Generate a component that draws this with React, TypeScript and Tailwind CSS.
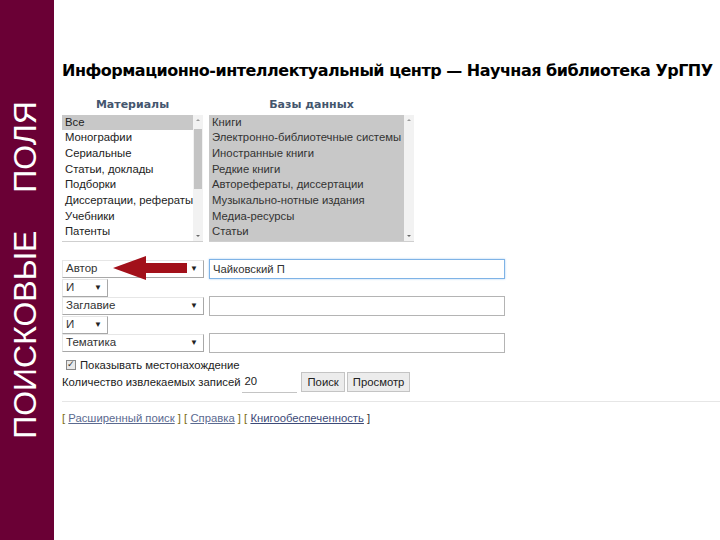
import React from 'react';

const materials = [
  'Все',
  'Монографии',
  'Сериальные',
  'Статьи, доклады',
  'Подборки',
  'Диссертации, рефераты',
  'Учебники',
  'Патенты',
];

const bases = [
  'Книги',
  'Электронно-библиотечные системы',
  'Иностранные книги',
  'Редкие книги',
  'Авторефераты, диссертации',
  'Музыкально-нотные издания',
  'Медиа-ресурсы',
  'Статьи',
];

function ScrollBar({ thumb }: { thumb: boolean }) {
  return (
    <div className="relative shrink-0 w-[10px] h-full bg-[#f2f2f2] flex flex-col items-center justify-between py-[4px]">
      <span className="w-0 h-0 border-l-[2px] border-r-[2px] border-b-[2px] border-l-transparent border-r-transparent border-b-[#9a9a9a]" />
      {thumb && <div className="absolute left-[1px] right-[1px] top-[14px] h-[60px] bg-[#c4c4c4]" />}
      <span className="w-0 h-0 border-l-[2px] border-r-[2px] border-t-[2px] border-l-transparent border-r-transparent border-t-[#6a6a6a]" />
    </div>
  );
}

function SelectBox({ label, width }: { label: string; width: string }) {
  return (
    <div
      className={`${width} shrink-0 h-[18px] flex items-center justify-between pl-[3px] pr-[5px] border-t border-l border-[#e6e6e6] border-r-[#a8a8a8] border-b-[#a8a8a8] border-r border-b bg-white text-[11.5px] text-[#333]`}
    >
      <span>{label}</span>
      <span className="text-[8px] text-[#222]">▼</span>
    </div>
  );
}

export default function App() {
  return (
    <div
      className="w-[720px] h-[540px] flex bg-white overflow-hidden"
      style={{ fontFamily: '"Liberation Sans", Arial, sans-serif' }}
    >
      {/* Sidebar */}
      <div className="w-[54px] shrink-0 h-full bg-[#6a0035] flex items-center justify-center">
        <div className="[writing-mode:vertical-rl] rotate-180 text-white text-[32px] leading-none flex gap-[38px] ml-[-4px]">
          <span>ПОИСКОВЫЕ</span>
          <span>ПОЛЯ</span>
        </div>
      </div>

      {/* Content */}
      <div className="relative flex-1 pl-[8px] pt-[59px]">
        <h1
          className="text-[16px] font-bold text-black leading-[24px] whitespace-nowrap tracking-[-0.5px]"
          style={{ fontFamily: '"DejaVu Sans", Verdana, sans-serif' }}
        >
          Информационно-интеллектуальный центр — Научная библиотека УрГПУ
        </h1>

        {/* Lists */}
        <div
          className="flex gap-[6px] mt-[14px] text-[11px] font-bold text-[#44566e]"
          style={{ fontFamily: '"DejaVu Sans", Verdana, sans-serif' }}
        >
          <div className="w-[141px] text-center">Материалы</div>
          <div className="w-[205px] text-center">Базы данных</div>
        </div>
        <div className="flex gap-[6px] mt-[1px] text-[11.3px] text-[#222]">
          <div className="w-[141px] h-[127px] flex border-b border-[#cfcfcf]">
            <div className="flex-1 leading-[15.7px] whitespace-nowrap overflow-hidden">
              {materials.map((m, i) => (
                <div key={m} className={`pl-[3px] ${i === 0 ? 'bg-[#c8c8c8]' : ''}`}>
                  {m}
                </div>
              ))}
            </div>
            <ScrollBar thumb />
          </div>
          <div className="w-[205px] h-[127px] flex border-b border-[#cfcfcf]">
            <div className="flex-1 leading-[15.7px] bg-[#c8c8c8] text-[#333] whitespace-nowrap overflow-hidden">
              {bases.map((b) => (
                <div key={b} className="pl-[3px]">
                  {b}
                </div>
              ))}
            </div>
            <ScrollBar thumb={false} />
          </div>
        </div>

        {/* Search fields */}
        <div className="mt-[18px] flex flex-col">
          <div className="flex items-center gap-[5px] h-[19px]">
            <SelectBox label="Автор" width="w-[142px]" />
            <div className="w-[296px] h-[20px] border border-[#7fb3e6] flex items-center pl-[3px] text-[11.3px] text-[#333] shadow-[0_0_2px_#a8cdf2]">
              Чайковский П
            </div>
          </div>
          <div className="h-[18px] flex items-center">
            <SelectBox label="И" width="w-[46px]" />
          </div>
          <div className="flex items-center gap-[5px] h-[19px]">
            <SelectBox label="Заглавие" width="w-[142px]" />
            <div className="w-[296px] h-[20px] border border-[#b4b4b4]" />
          </div>
          <div className="h-[18px] flex items-center">
            <SelectBox label="И" width="w-[46px]" />
          </div>
          <div className="flex items-center gap-[5px] h-[19px]">
            <SelectBox label="Тематика" width="w-[142px]" />
            <div className="w-[296px] h-[20px] border border-[#b4b4b4]" />
          </div>
        </div>

        <div className="mt-[5px] flex items-center gap-[4px] pl-[4px] text-[11.3px] text-[#222] leading-[14px]">
          <span className="w-[10px] h-[10px] border border-[#888] bg-[#e9e9e9] flex items-center justify-center text-[9px] leading-none text-[#333]">
            ✓
          </span>
          <span>Показывать местонахождение</span>
        </div>

        <div className="flex items-center text-[11.3px] text-[#222]">
          <span>Количество извлекаемых записей</span>
          <div className="ml-[2px] w-[55px] h-[21px] border-b border-[#c4c4c4] flex items-center pl-[2px]">
            20
          </div>
          <button className="ml-[4px] h-[20px] px-[5px] border border-[#c4c4c4] bg-[#ececec] text-[11.3px] text-[#222]">
            Поиск
          </button>
          <button className="ml-[2px] h-[20px] px-[5px] border border-[#c4c4c4] bg-[#ececec] text-[11.3px] text-[#222]">
            Просмотр
          </button>
        </div>

        <div className="mt-[8px] h-px bg-[#e6e6e6]" />

        <div className="mt-[8px] text-[11.3px] text-[#333] whitespace-pre">
          <span className="text-[#7a6a10]">[ </span>
          <span className="text-[#5b6a90] underline">Расширенный поиск</span>
          <span className="text-[#7a6a10]"> ] [ </span>
          <span className="text-[#5b6a90] underline">Справка</span>
          <span className="text-[#7a6a10]"> ] [ </span>
          <span className="text-[#3c4a78] underline">Книгообеспеченность</span>
          <span className="text-[#333]"> ]</span>
        </div>

        {/* Red arrow overlay */}
        <svg className="absolute left-[59px] top-[256px]" width="76" height="26" viewBox="0 0 76 26">
          <polygon points="0,12 33,0 33,7 74,7 74,17 33,17 33,24" fill="#a2101a" />
        </svg>
      </div>
    </div>
  );
}
